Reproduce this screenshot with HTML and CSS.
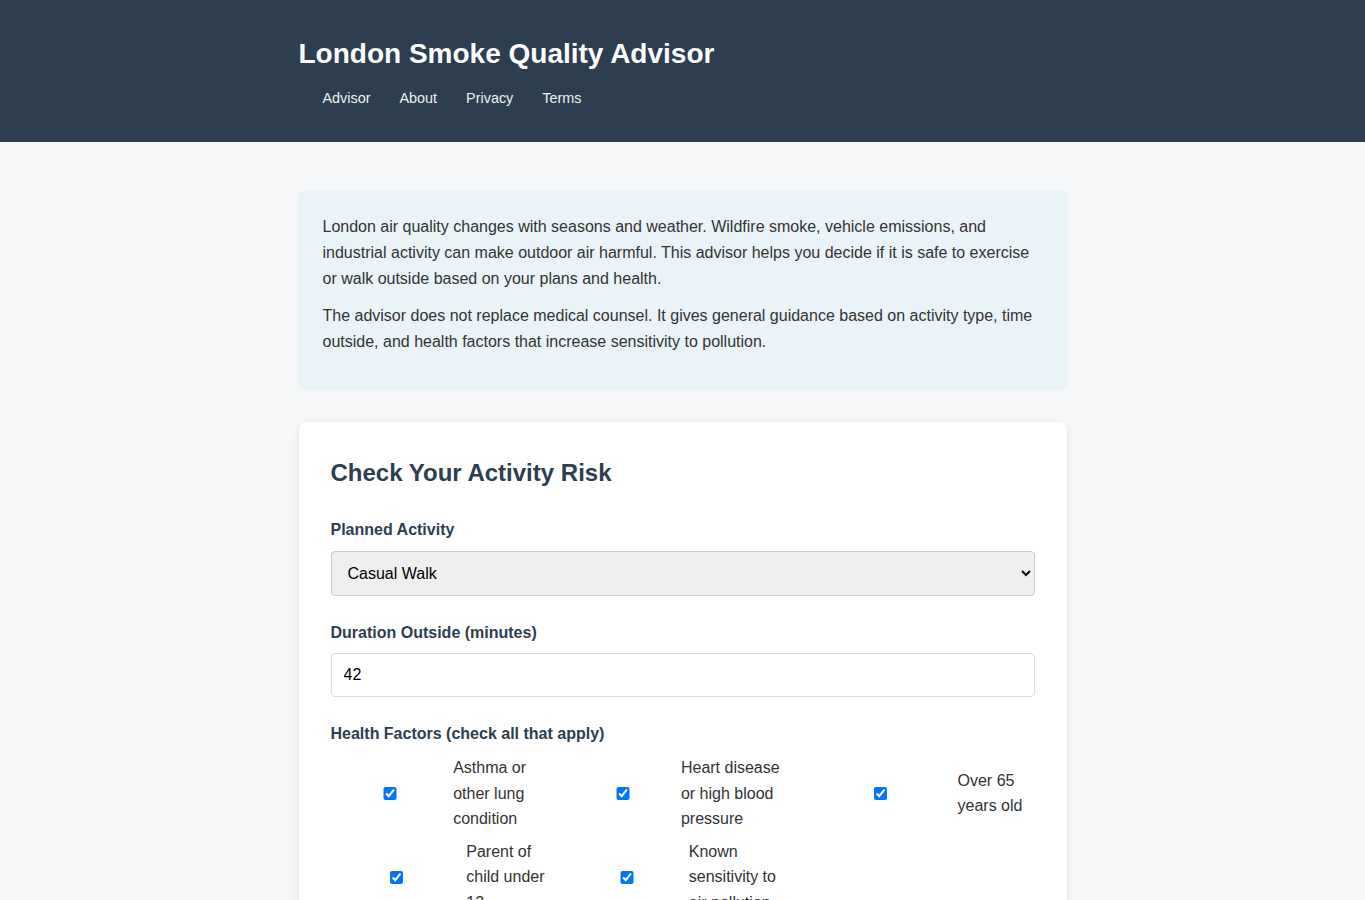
FILE: index.html
```html
<!DOCTYPE html>
<html lang="en">
<head>
  <meta charset="UTF-8">
  <meta name="viewport" content="width=device-width, initial-scale=1.0">
  <title>London Smoke Quality Advisor</title>

  <link rel="stylesheet" href="styles.css">
</head>

<body>
  <header class="site-header">
    <div class="container">
      <h1>London Smoke Quality Advisor</h1>
      <nav class="site-nav">
        <a href="#">Advisor</a>
        <a href="#">About</a>
        <a href="#">Privacy</a>
        <a href="#">Terms</a>
      </nav>
    </div>
  </header>

  <main class="container">
    <section class="intro">
      <p>London air quality changes with seasons and weather. Wildfire smoke, vehicle emissions, and industrial activity can make outdoor air harmful. This advisor helps you decide if it is safe to exercise or walk outside based on your plans and health.</p>
      <p>The advisor does not replace medical counsel. It gives general guidance based on activity type, time outside, and health factors that increase sensitivity to pollution.</p>
    </section>

    <section class="card">
      <h2>Check Your Activity Risk</h2>
      <form id="advisor-form">
        <div class="form-group">
          <label for="activity">Planned Activity</label>
          <select id="activity">
            <option>Casual Walk</option>
            <option>Jogging</option>
            <option>Cycling</option>
            <option>Running</option>
            <option>Outdoor Sports</option>
          </select>
        </div>

        <div class="form-group">
          <label for="duration">Duration Outside (minutes)</label>
          <input type="number" id="duration" value="42">
        </div>

        <div class="form-group">
          <label>Health Factors (check all that apply)</label>
          <div class="checkbox-grid">
            <label class="checkbox-item"><input type="checkbox" checked> <span>Asthma or other lung condition</span></label>
            <label class="checkbox-item"><input type="checkbox" checked> <span>Heart disease or high blood pressure</span></label>
            <label class="checkbox-item"><input type="checkbox" checked> <span>Over 65 years old</span></label>
            <label class="checkbox-item"><input type="checkbox" checked> <span>Parent of child under 12</span></label>
            <label class="checkbox-item"><input type="checkbox" checked> <span>Known sensitivity to air pollution</span></label>
          </div>
        </div>

        <button type="submit" class="btn">Check Risk</button>
      </form>
    </section>
  </main>
</body>
</html>
```

FILE: styles.css
```css
* {
  box-sizing: border-box;
}

body {
  margin: 0;
  background-color: #f5f7f9;
  color: #333;
  font-family: 'Liberation Sans', Arial, sans-serif;
  font-size: 16px;
  line-height: 1.6;
}

.container {
  max-width: 768px;
  margin: 0 auto;
}

.site-header {
  background-color: #2c3e50;
  color: white;
  padding: 32px 0;
}

.site-header h1 {
  margin: 0;
  font-size: 28px;
}

.site-nav {
  display: flex;
  gap: 29px;
  margin-top: 10px;
  padding-left: 24px;
}

.site-nav a {
  color: #ecf0f1;
  text-decoration: none;
  font-size: 0.9rem;
}

main.container {
  padding: 48px 0;
}

.intro {
  background-color: #e9f3f8;
  border-radius: 8px;
  padding: 24px 24px 22px;
  margin-bottom: 34px;
  box-shadow: 0 1px 3px rgba(0, 0, 0, 0.05);
}

.intro p {
  margin: 0 0 11px;
  line-height: 26px;
}

.card {
  background-color: white;
  border-radius: 8px;
  padding: 32px;
  box-shadow: 0 2px 8px rgba(0, 0, 0, 0.08);
}

.card h2 {
  margin: 0 0 25px;
  font-size: 24px;
  color: #2c3e50;
}

.form-group {
  margin-bottom: 24px;
}

.form-group > label {
  display: block;
  margin-bottom: 8px;
  font-weight: bold;
  color: #2c3e50;
}

select,
input {
  width: 100%;
  padding: 12px;
  font-family: inherit;
  font-size: 16px;
  border: 1px solid #ddd;
  border-radius: 4px;
}

select {
  background-color: #efefef;
  border-color: #ccc;
}

.checkbox-grid {
  display: grid;
  grid-template-columns: repeat(auto-fit, minmax(200px, 1fr));
  gap: 7px 10px;
}

.checkbox-item {
  display: flex;
  align-items: center;
  gap: 5px;
  color: #333;
}

.btn {
  width: 100%;
  padding: 14px;
  font-size: 17px;
  font-weight: bold;
  color: white;
  background-color: #2980b9;
  border: none;
  border-radius: 4px;
}
```
